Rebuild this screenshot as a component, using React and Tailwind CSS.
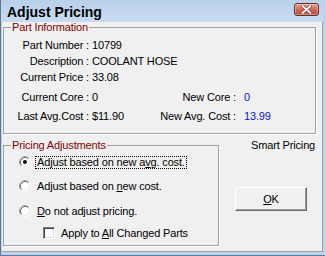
import React from "react";

function Radio({ checked }) {
  return (
    <svg width="12" height="12" viewBox="0 0 12 12" className="shrink-0">
      <circle cx="6" cy="6" r="5" fill="#fff" />
      <path d="M2.11 9.89A5.5 5.5 0 0 1 9.89 2.11" fill="none" stroke="#a0a0a0" />
      <path d="M9.89 2.11A5.5 5.5 0 0 1 2.11 9.89" fill="none" stroke="#ffffff" />
      <path d="M2.82 9.18A4.5 4.5 0 0 1 9.18 2.82" fill="none" stroke="#696969" />
      <path d="M9.18 2.82A4.5 4.5 0 0 1 2.82 9.18" fill="none" stroke="#e3e3e3" />
      {checked && <circle cx="6" cy="6" r="2" fill="#000" />}
    </svg>
  );
}

function InfoRow({ label, value, className = "" }) {
  return (
    <div className={"flex h-[16px] items-center " + className}>
      <span className="w-[85px] text-right">{label}</span>
      <span className="ml-[3px]">{value}</span>
    </div>
  );
}

function SplitRow({ label, value, label2, value2, className = "" }) {
  return (
    <div className={"flex h-[16px] items-center " + className}>
      <span className="w-[85px] text-right">{label}</span>
      <span className="ml-[3px] w-[63px]">{value}</span>
      <span className="w-[81px] text-right">{label2}</span>
      <span className="ml-[8px] text-[#1414d2]">{value2}</span>
    </div>
  );
}

export default function App() {
  return (
    <div className="w-[325px] h-[256px] flex flex-col bg-[#bdd3eb] border-l border-b border-[#5c7694] pr-[2px] pb-[3px] font-['Liberation_Sans',Arial,sans-serif] text-[11px] tracking-[-0.15px] text-black leading-[13px] overflow-hidden">
      {/* Title bar */}
      <div className="h-[22px] shrink-0 flex items-center justify-between bg-gradient-to-b from-[#b9d0ea] to-[#c8dbf0] pl-[6px] pr-[4px]">
        <span className="pt-[2px] text-[14px] font-bold tracking-normal leading-[16px]">Adjust Pricing</span>
        <div className="mb-[4px] w-[25px] h-[13px] rounded-[3px] border border-[#6b2b23] bg-gradient-to-b from-[#e8a493] via-[#d0685a] to-[#c24a3a] flex items-center justify-center shadow-[inset_0_0_0_1px_rgba(255,255,255,0.35)]">
          <svg width="11" height="9" viewBox="0 0 11 9">
            <path d="M1.5 1l8 7M9.5 1l-8 7" stroke="#7a3a33" strokeWidth="3.2" strokeLinecap="round" />
            <path d="M1.5 1l8 7M9.5 1l-8 7" stroke="#ffffff" strokeWidth="1.8" strokeLinecap="round" />
          </svg>
        </div>
      </div>

      {/* Client area */}
      <div className="flex-1 ml-[1px] bg-[#f0f0f0] border-r border-b border-[#a0a0a0] flex flex-col">
        <fieldset className="mt-[-1px] ml-[1px] w-[313px] border border-[#a0a0a0] shadow-[1px_1px_0_#fff] pb-[9px]">
          <legend className="ml-[7px] px-[1px] text-[#800000]">Part Information</legend>
          <div className="pt-[3px] flex flex-col">
            <InfoRow label="Part Number :" value="10799" />
            <InfoRow label="Description :" value="COOLANT HOSE" />
            <InfoRow label="Current Price :" value="33.08" />
            <SplitRow className="mt-[4px]" label="Current Core :" value="0" label2="New Core :" value2="0" />
            <SplitRow className="mt-[3px]" label="Last Avg.Cost :" value="$11.90" label2="New Avg. Cost :" value2="13.99" />
          </div>
        </fieldset>

        <div className="mt-[5px] flex">
          <fieldset className="ml-[1px] w-[216px] border border-[#a0a0a0] shadow-[1px_1px_0_#fff] pb-[4px]">
            <legend className="ml-[7px] px-[1px] text-[#800000]">Pricing Adjustments</legend>
            <div className="pt-[2px] pl-[15px] flex flex-col">
              <div className="flex h-[16px] items-center">
                <Radio checked />
                <span className="ml-[4px] px-[1px] border border-dotted border-black leading-[11px]">
                  Adjust based on new a<span className="underline">v</span>g. cost.
                </span>
              </div>
              <div className="mt-[8px] flex h-[16px] items-center">
                <Radio />
                <span className="ml-[6px]">
                  Adjust based on <span className="underline">n</span>ew cost.
                </span>
              </div>
              <div className="mt-[9px] flex h-[16px] items-center">
                <Radio />
                <span className="ml-[6px]">
                  <span className="underline">D</span>o not adjust pricing.
                </span>
              </div>
              <div className="mt-[6px] flex h-[16px] items-center pl-[24px]">
                <div className="w-[12px] h-[12px] shrink-0 bg-white border border-t-[#808080] border-l-[#808080] border-r-white border-b-white shadow-[inset_1px_1px_0_#404040,inset_-1px_-1px_0_#dcdcdc]" />
                <span className="ml-[6px]">
                  Apply to <span className="underline">A</span>ll Changed Parts
                </span>
              </div>
            </div>
          </fieldset>

          <div className="flex-1 flex flex-col">
            <span className="ml-[32px] mt-[0px]">Smart Pricing</span>
            <button className="ml-[16px] mt-[35px] w-[72px] h-[24px] bg-[#f0f0f0] border border-t-white border-l-white border-r-[#696969] border-b-[#696969] shadow-[inset_-1px_-1px_0_#a0a0a0] flex items-center justify-center">
              <span>
                <span className="underline">O</span>K
              </span>
            </button>
          </div>
        </div>
      </div>
    </div>
  );
}
